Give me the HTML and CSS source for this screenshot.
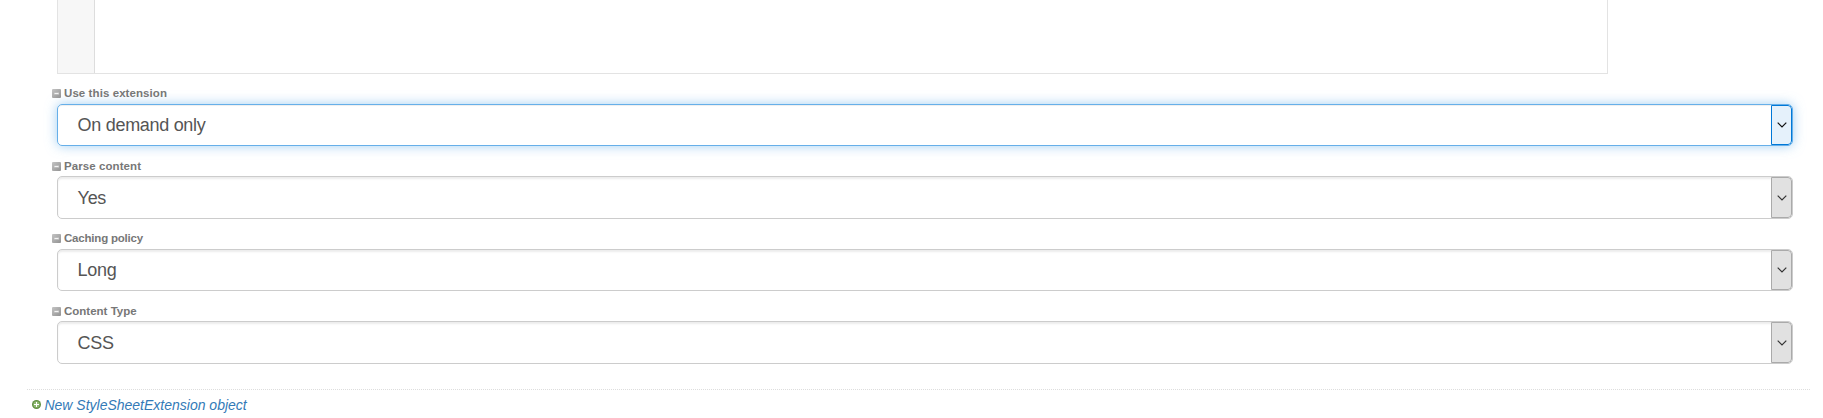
FILE: index.html
```html
<!DOCTYPE html>
<html lang="en">
<head>
<meta charset="utf-8">
<title>StyleSheetExtension</title>
<link rel="stylesheet" href="styles.css">
</head>
<body>
<svg width="0" height="0" class="defs" aria-hidden="true">
  <defs>
    <linearGradient id="grey" x1="0" y1="0" x2="1" y2="1"><stop offset="0" stop-color="#c4c4c4"/><stop offset="1" stop-color="#929292"/></linearGradient>
    <symbol id="minus" viewBox="0 0 9 9"><rect width="9" height="9" rx="1" fill="url(#grey)"/><path d="M2 3h5v3H2z" fill="#bbb"/><path d="M2.5 4h4v1h-4z" fill="#f4f4f4"/></symbol>
    <symbol id="chevron" viewBox="0 0 10 6"><path d="M.7.7 5 5 9.3.7" fill="none" stroke="currentColor" stroke-width="1.2"/></symbol>
  </defs>
</svg>
<main class="form">
  <div class="editor"><div class="gutter"></div></div>
  <div class="fields">
    <div class="field"><div class="label"><svg class="toggle"><use href="#minus"/></svg><span class="wide">Use this extension</span></div>
      <div class="select focused"><span class="value">On demand only</span><span class="arrow"><svg><use href="#chevron"/></svg></span></div></div>
    <div class="field"><div class="label"><svg class="toggle"><use href="#minus"/></svg><span class="wide">Parse content</span></div>
      <div class="select"><span class="value">Yes</span><span class="arrow"><svg><use href="#chevron"/></svg></span></div></div>
    <div class="field"><div class="label"><svg class="toggle"><use href="#minus"/></svg><span class="tight">Caching policy</span></div>
      <div class="select"><span class="value">Long</span><span class="arrow"><svg><use href="#chevron"/></svg></span></div></div>
    <div class="field"><div class="label"><svg class="toggle"><use href="#minus"/></svg><span>Content Type</span></div>
      <div class="select"><span class="value">CSS</span><span class="arrow"><svg><use href="#chevron"/></svg></span></div></div>
  </div>
  <div class="footer">
    <svg class="add" viewBox="0 0 9 9"><circle cx="4.5" cy="4.5" r="4.5" fill="#5f8f40"/><circle cx="4.5" cy="4.5" r="3.2" fill="#8fb870"/><path d="M4 2h1v2h2v1H5v2H4V5H2V4h2z" fill="#fff"/></svg>
    <a class="link">New StyleSheetExtension object</a>
  </div>
</main>
</body>
</html>
```
FILE: styles.css
```css
* { box-sizing: border-box; }
body { margin: 0; background: #fff; font-family: "Liberation Sans", Arial, sans-serif; overflow: hidden; }
.defs { display: block; height: 0; }
.form { height: 418px; display: flex; flex-direction: column; }
.editor { flex: none; height: 74px; width: 1551px; margin-left: 57px; border: 1px solid #e3e3e3; border-top: 0; display: flex; }
.gutter { width: 37px; background: #f7f7f7; border-right: 1px solid #ddd; }
.fields { flex: none; height: 315px; padding: 11.9px 30px 0 52px; }
.field { height: 72.5px; }
.label { height: 18px; display: flex; align-items: center; gap: 3px; padding-bottom: 2.6px; color: #777; font-size: 11.5px; font-weight: bold; line-height: 15px; }
.wide { letter-spacing: .08px; }
.tight { letter-spacing: -.2px; }
.toggle { width: 9px; height: 9px; flex: none; }
.select { height: 42.3px; margin-left: 5px; display: flex; border: 1px solid #ccc; border-radius: 5px; box-shadow: inset 0 2px 2px rgba(0,0,0,.08); color: #555; font-size: 18px; overflow: hidden; }
.value { flex: 1; padding: .2px 0 0 19.6px; line-height: 40px; letter-spacing: -.3px; }
.arrow { width: 21px; border: 1px solid #aaa; border-radius: 0 4px 4px 0; background: #e1e1e1; color: #333; display: flex; align-items: center; justify-content: center; }
.arrow svg { width: 10px; height: 6px; }
.focused { border-color: #66afe9; box-shadow: inset 0 1px 1px rgba(0,0,0,.07), 0 0 12px rgba(102,175,233,.6); }
.focused .arrow { border-color: #0078d7; background: #e5f1fb; color: #111; }
.footer { flex: none; height: 29px; margin: 0 13px 0 27px; padding: 1px 0 0 5px; border-top: 1px dotted #ddd; display: flex; align-items: center; gap: 3.4px; }
.add { width: 9px; height: 9px; flex: none; }
.link { color: #337ab7; font-size: 14px; font-style: italic; }
```
